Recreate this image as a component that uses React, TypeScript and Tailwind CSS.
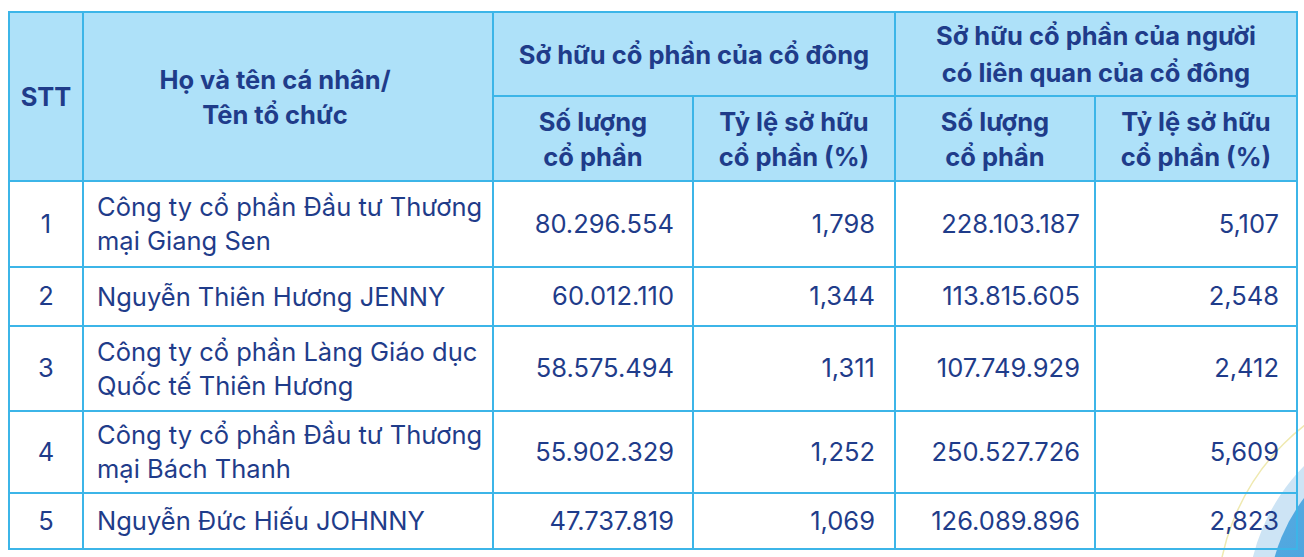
const rows = [
  { stt: "1", name: ["Công ty cổ phần Đầu tư Thương", "mại Giang Sen"], a: "80.296.554", b: "1,798", c: "228.103.187", d: "5,107", h: "h-[86px]" },
  { stt: "2", name: ["Nguyễn Thiên Hương JENNY"], a: "60.012.110", b: "1,344", c: "113.815.605", d: "2,548", h: "h-[59px]" },
  { stt: "3", name: ["Công ty cổ phần Làng Giáo dục", "Quốc tế Thiên Hương"], a: "58.575.494", b: "1,311", c: "107.749.929", d: "2,412", h: "h-[85px]" },
  { stt: "4", name: ["Công ty cổ phần Đầu tư Thương", "mại Bách Thanh"], a: "55.902.329", b: "1,252", c: "250.527.726", d: "5,609", h: "h-[82px]" },
  { stt: "5", name: ["Nguyễn Đức Hiếu JOHNNY"], a: "47.737.819", b: "1,069", c: "126.089.896", d: "2,823", h: "h-[56px]" },
]

function Decoration() {
  return (
    <svg className="absolute left-0 top-0 w-[1304px] h-[557px] pointer-events-none" viewBox="0 0 1304 557">
      <defs>
        <linearGradient id="deep" x1="0" y1="0" x2="1" y2="1">
          <stop offset="0" stopColor="#5aaee3" />
          <stop offset="1" stopColor="#2a8cd2" />
        </linearGradient>
      </defs>
      <circle cx="1445" cy="605" r="228" fill="none" stroke="#efe9b0" strokeWidth="1.5" />
      <circle cx="1445" cy="605" r="198" fill="#cde4f5" />
      <circle cx="1445" cy="605" r="177" fill="url(#deep)" />
    </svg>
  )
}

export default function App() {
  const th = "border-2 border-[#3cb5e8] bg-[#aee1f9] text-[#1f3c8a] font-bold text-center align-middle leading-[35px]"
  const td = "border-2 border-[#3cb5e8] text-[#1f3c8a] align-middle"

  return (
    <div className="relative w-[1304px] h-[557px] bg-white overflow-hidden" style={{ fontFamily: "Inter, 'Noto Sans', sans-serif" }}>
      <Decoration />
      <div className="relative pl-[8px] pt-[11px]">
        <table className="border-collapse table-fixed w-[1288px] text-[25.5px]">
          <colgroup>
            <col className="w-[74px]" />
            <col className="w-[410px]" />
            <col className="w-[200px]" />
            <col className="w-[202px]" />
            <col className="w-[200px]" />
            <col className="w-[202px]" />
          </colgroup>
          <thead>
            <tr className="h-[84px]">
              <th rowSpan={2} className={th}>STT</th>
              <th rowSpan={2} className={`${th} pr-[26px]`}>
                <div>Họ và tên cá nhân/</div>
                <div>Tên tổ chức</div>
              </th>
              <th colSpan={2} className={th}>Sở hữu cổ phần của cổ đông</th>
              <th colSpan={2} className={`${th} leading-[37px]`}>
                <div>Sở hữu cổ phần của người</div>
                <div>có liên quan của cổ đông</div>
              </th>
            </tr>
            <tr className="h-[85px]">
              <th className={th}>
                <div>Số lượng</div>
                <div>cổ phần</div>
              </th>
              <th className={th}>
                <div>Tỷ lệ sở hữu</div>
                <div>cổ phần (%)</div>
              </th>
              <th className={th}>
                <div>Số lượng</div>
                <div>cổ phần</div>
              </th>
              <th className={th}>
                <div>Tỷ lệ sở hữu</div>
                <div>cổ phần (%)</div>
              </th>
            </tr>
          </thead>
          <tbody>
            {rows.map((r) => (
              <tr key={r.stt} className={r.h}>
                <td className={`${td} text-center`}>{r.stt}</td>
                <td className={`${td} pl-[13px] leading-[34px] whitespace-nowrap`}>
                  {r.name.map((n) => (
                    <div key={n}>{n}</div>
                  ))}
                </td>
                <td className={`${td} text-right pr-[18px]`}>{r.a}</td>
                <td className={`${td} text-right pr-[19px]`}>{r.b}</td>
                <td className={`${td} text-right pr-[14px]`}>{r.c}</td>
                <td className={`${td} text-right pr-[17px]`}>{r.d}</td>
              </tr>
            ))}
          </tbody>
        </table>
      </div>
    </div>
  )
}
